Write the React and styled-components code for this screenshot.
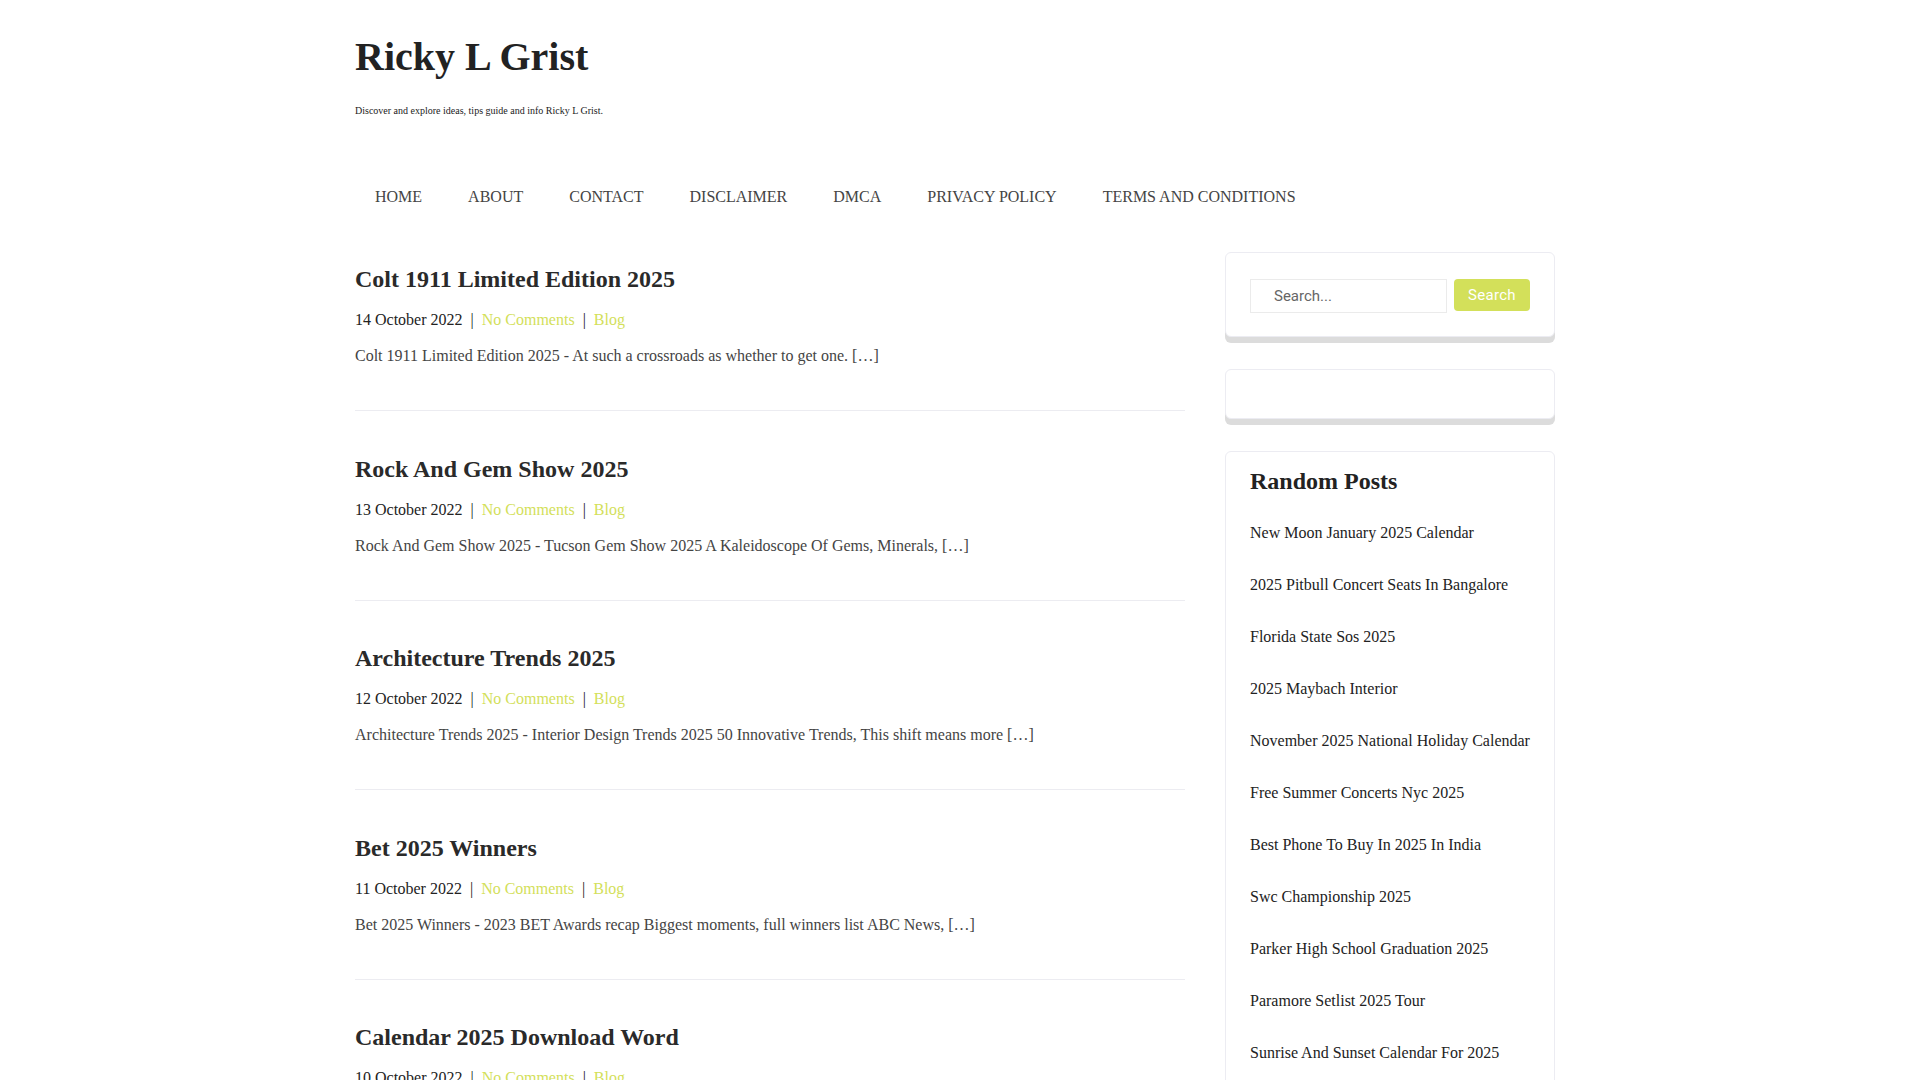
import React from "react";
import styled, { createGlobalStyle } from "styled-components";

const accent = "#d3e05a";

const GlobalStyle = createGlobalStyle`
  html, body {
    margin: 0;
    padding: 0;
    background: #fff;
  }
  body {
    font-family: "Liberation Serif", "Times New Roman", serif;
    color: #222;
  }
  a {
    text-decoration: none;
  }
`;

// leaves room on the right like the page's scrollbar gutter
const Page = styled.div`
  padding-right: 10px;
`;

const Container = styled.div`
  width: 1200px;
  margin: 0 auto;
`;

const Header = styled.header`
  padding-top: 33px;
`;

const SiteTitle = styled.h1`
  margin: 0;
  font-size: 40px;
  line-height: 48px;
  font-weight: 700;
  color: #222;
`;

const Tagline = styled.p`
  margin: 22px 0 0;
  font-size: 10px;
  line-height: 15px;
  color: #222;
`;

const Nav = styled.nav`
  display: flex;
  gap: 6px;
  margin-top: 67px;
`;

const NavLink = styled.a`
  padding: 0 20px;
  font-size: 16px;
  line-height: 24px;
  color: #444;
  text-transform: uppercase;
`;

const Layout = styled.div`
  display: grid;
  grid-template-columns: 830px 330px;
  gap: 40px;
  align-items: start;
  margin-top: 43px;
  padding-bottom: 60px;
`;

const Main = styled.main`
  padding-top: 13px;
`;

const Article = styled.article`
  padding-bottom: 42px;
  margin-bottom: 43.5px;
  border-bottom: 1px solid #ececf1;
`;

const PostTitle = styled.h2`
  margin: 0;
  font-size: 24px;
  line-height: 29px;
  font-weight: 700;
  color: #2a2a2a;
`;

const Meta = styled.div`
  margin-top: 14px;
  font-size: 16px;
  line-height: 24px;
  color: #222;
`;

const MetaLink = styled.a`
  color: ${accent};
`;

const Sep = styled.span`
  margin: 0 8px;
`;

const Excerpt = styled.p`
  margin: 12px 0 0;
  font-size: 16px;
  line-height: 24px;
  color: #444;
`;

const Pagination = styled.div`
  display: flex;
  gap: 8px;
  font-size: 16px;
`;

const PageNum = styled.a`
  display: inline-flex;
  align-items: center;
  justify-content: center;
  min-width: 36px;
  height: 36px;
  padding: 0 8px;
  box-sizing: border-box;
  border-radius: 4px;
  border: 1px solid #ececf1;
  color: ${(p) => (p.$active ? "#fff" : "#444")};
  background: ${(p) => (p.$active ? accent : "#fff")};
`;

const Sidebar = styled.aside`
  display: flex;
  flex-direction: column;
  gap: 32px;
`;

const Widget = styled.section`
  padding: ${(p) => p.$pad || "24px"};
  border: 1px solid #ececf2;
  border-radius: 6px;
  box-shadow: 0 6px 0 0 #dcdcdc;
  background: #fff;
`;

const SearchForm = styled.form`
  display: flex;
  gap: 7px;
  align-items: flex-start;
`;

const SearchInput = styled.input`
  flex: 1;
  min-width: 0;
  height: 34px;
  box-sizing: border-box;
  padding: 0 12px 0 23px;
  border: 1px solid #ebebeb;
  font-family: Roboto, "Liberation Sans", sans-serif;
  font-size: 15px;
  color: #444;
  outline: none;
  &::placeholder {
    color: #666;
  }
`;

const SearchButton = styled.button`
  width: 76px;
  height: 32px;
  border: 0;
  border-radius: 4px;
  background: ${accent};
  color: #fff;
  font-family: Roboto, "Liberation Sans", sans-serif;
  font-size: 15px;
  letter-spacing: 0.3px;
  cursor: pointer;
`;

const WidgetTitle = styled.h3`
  margin: 0 0 11px;
  font-size: 24px;
  line-height: 29px;
  font-weight: 700;
  color: #222;
`;

const PostList = styled.ul`
  list-style: none;
  margin: 0;
  padding: 0;
`;

const PostItem = styled.li`
  padding: 14px 0;
  font-size: 16px;
  line-height: 24px;
  a {
    color: #222;
  }
`;

const Footer = styled.footer`
  padding: 40px 0;
  border-top: 1px solid #ececf1;
  font-size: 14px;
  color: #666;
  text-align: center;
`;

const navItems = [
  "Home",
  "About",
  "Contact",
  "Disclaimer",
  "DMCA",
  "Privacy Policy",
  "Terms and Conditions",
];

const posts = [
  {
    title: "Colt 1911 Limited Edition 2025",
    date: "14 October 2022",
    excerpt:
      "Colt 1911 Limited Edition 2025 - At such a crossroads as whether to get one. […]",
  },
  {
    title: "Rock And Gem Show 2025",
    date: "13 October 2022",
    excerpt:
      "Rock And Gem Show 2025 - Tucson Gem Show 2025 A Kaleidoscope Of Gems, Minerals, […]",
  },
  {
    title: "Architecture Trends 2025",
    date: "12 October 2022",
    excerpt:
      "Architecture Trends 2025 - Interior Design Trends 2025 50 Innovative Trends, This shift means more […]",
  },
  {
    title: "Bet 2025 Winners",
    date: "11 October 2022",
    excerpt:
      "Bet 2025 Winners - 2023 BET Awards recap Biggest moments, full winners list ABC News, […]",
  },
  {
    title: "Calendar 2025 Download Word",
    date: "10 October 2022",
    excerpt:
      "Calendar 2025 Download Word - Free Printable 2025 Calendar Templates For Word, […]",
  },
  {
    title: "Nfl Draft Order 2025",
    date: "9 October 2022",
    excerpt: "Nfl Draft Order 2025 - Full first round order and team needs. […]",
  },
  {
    title: "Toyota Tacoma 2025 Release Date",
    date: "8 October 2022",
    excerpt:
      "Toyota Tacoma 2025 Release Date - Everything we know so far about the new truck. […]",
  },
  {
    title: "Easter Sunday 2025 Date",
    date: "7 October 2022",
    excerpt: "Easter Sunday 2025 Date - When is Easter this year and why it moves. […]",
  },
  {
    title: "Best Hybrid Suv 2025",
    date: "6 October 2022",
    excerpt: "Best Hybrid Suv 2025 - Top picks for fuel economy and comfort. […]",
  },
  {
    title: "Chinese New Year 2025 Animal",
    date: "5 October 2022",
    excerpt:
      "Chinese New Year 2025 Animal - The Year Of The Snake and what it means. […]",
  },
];

const randomPosts = [
  "New Moon January 2025 Calendar",
  "2025 Pitbull Concert Seats In Bangalore",
  "Florida State Sos 2025",
  "2025 Maybach Interior",
  "November 2025 National Holiday Calendar",
  "Free Summer Concerts Nyc 2025",
  "Best Phone To Buy In 2025 In India",
  "Swc Championship 2025",
  "Parker High School Graduation 2025",
  "Paramore Setlist 2025 Tour",
  "Sunrise And Sunset Calendar For 2025",
];

const App = () => {
  return (
    <Page>
      <GlobalStyle />
      <Container>
        <Header>
          <SiteTitle>Ricky L Grist</SiteTitle>
          <Tagline>Discover and explore ideas, tips guide and info Ricky L Grist.</Tagline>
          <Nav>
            {navItems.map((item) => (
              <NavLink key={item} href="#">
                {item}
              </NavLink>
            ))}
          </Nav>
        </Header>

        <Layout>
          <Main>
            {posts.map((post) => (
              <Article key={post.title}>
                <PostTitle>{post.title}</PostTitle>
                <Meta>
                  {post.date}
                  <Sep>|</Sep>
                  <MetaLink href="#">No Comments</MetaLink>
                  <Sep>|</Sep>
                  <MetaLink href="#">Blog</MetaLink>
                </Meta>
                <Excerpt>{post.excerpt}</Excerpt>
              </Article>
            ))}
            <Pagination>
              <PageNum $active>1</PageNum>
              <PageNum href="#">2</PageNum>
              <PageNum href="#">3</PageNum>
              <PageNum href="#">Next</PageNum>
            </Pagination>
          </Main>

          <Sidebar>
            <Widget $pad="26px 24px 23px">
              <SearchForm onSubmit={(e) => e.preventDefault()}>
                <SearchInput type="search" placeholder="Search..." />
                <SearchButton type="submit">Search</SearchButton>
              </SearchForm>
            </Widget>
            <Widget />
            <Widget $pad="15px 24px 12px">
              <WidgetTitle>Random Posts</WidgetTitle>
              <PostList>
                {randomPosts.map((title) => (
                  <PostItem key={title}>
                    <a href="#">{title}</a>
                  </PostItem>
                ))}
              </PostList>
            </Widget>
          </Sidebar>
        </Layout>

        <Footer>Copyright © 2025 Ricky L Grist</Footer>
      </Container>
    </Page>
  );
};

export default App;
